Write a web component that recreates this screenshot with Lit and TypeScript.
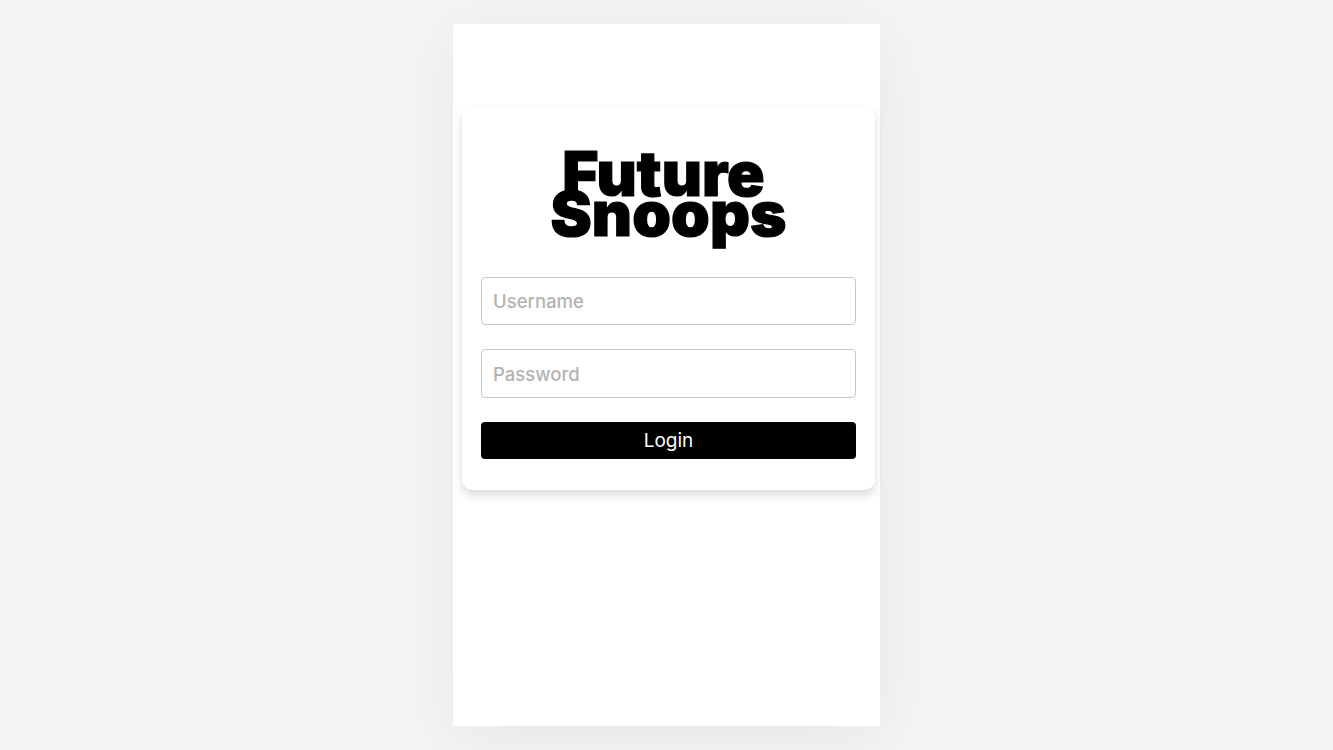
import { LitElement, html, css } from "lit";
import { customElement } from "lit/decorators.js";

@customElement("app-root")
export class AppRoot extends LitElement {
  static styles = css`
    :host { display: block; }
    .page {
      height: 750px; box-sizing: border-box; background: #f4f4f6;
      padding: 24px 453px 24px 453px; font-family: Inter, "Noto Sans", sans-serif; overflow: hidden;
    }
    .panel {
      width: 427px; height: 702px; box-sizing: border-box; background: #fff;
      padding: 83px 5px 0 9px;
      box-shadow: 0 12px 60px rgba(0,0,0,.06);
    }
    .card {
      height: 383px; box-sizing: border-box; background: #fff; border-radius: 10px;
      padding: 0 19px; box-shadow: 0 5px 10px rgba(0,0,0,.15), 0 0 1px rgba(0,0,0,.04);
      display: flex; flex-direction: column;
    }
    .logo {
      height: 170px; display: flex; flex-direction: column; align-items: center;
      font-family: Inter, sans-serif; font-weight: 900; color: #000; padding-top: 47px; box-sizing: border-box;
      font-size: 62px; letter-spacing: 0.1px; -webkit-text-stroke: 1.2px #000;
    }
    .logo span { display: block; line-height: 39.5px; }
    .logo .first { margin-right: 10px; }
    .field {
      box-sizing: border-box; border: 1px solid #c6c6c6; border-radius: 4px; background: #fff;
      display: flex; align-items: center; padding-left: 11px;
      color: #b3b3b3; font-size: 18.5px; font-weight: 500;
    }
    .u { height: 48px; margin-bottom: 24px; }
    .p { height: 49px; margin-bottom: 24px; padding-top: 1px; }
    .btn {
      height: 37px; background: #000; color: #fff; border-radius: 4px; font-size: 19px;
      display: flex; align-items: center; justify-content: center;
    }
  `;
  render() {
    return html`<div class="page"><div class="panel"><div class="card">
      <div class="logo"><span class="first">Future</span><span>Snoops</span></div>
      <div class="field u">Username</div>
      <div class="field p">Password</div>
      <div class="btn">Login</div>
    </div></div></div>`;
  }
}
